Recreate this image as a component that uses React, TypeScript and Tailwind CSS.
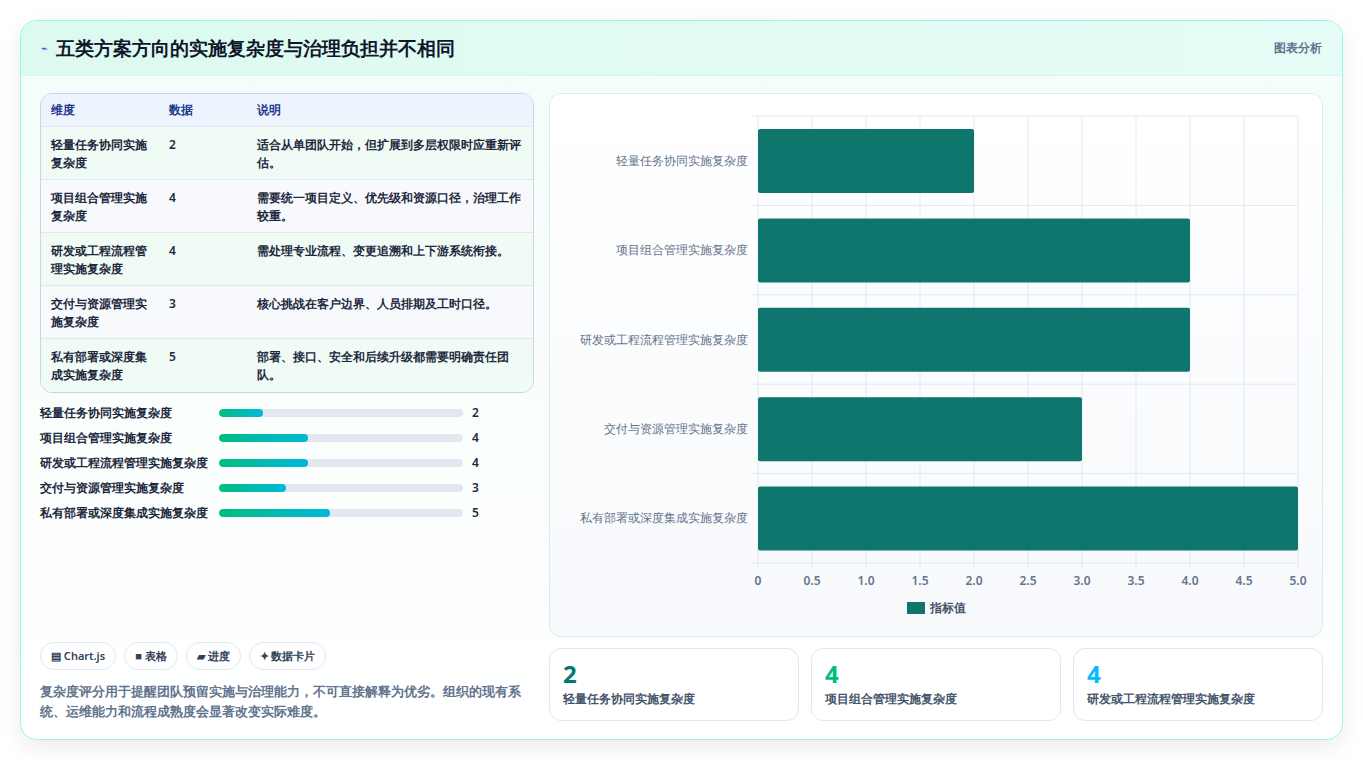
const rows = [
  { name: "轻量任务协同实施复杂度", value: 2, note: "适合从单团队开始，但扩展到多层权限时应重新评估。" },
  { name: "项目组合管理实施复杂度", value: 4, note: "需要统一项目定义、优先级和资源口径，治理工作较重。" },
  { name: "研发或工程流程管理实施复杂度", value: 4, note: "需处理专业流程、变更追溯和上下游系统衔接。" },
  { name: "交付与资源管理实施复杂度", value: 3, note: "核心挑战在客户边界、人员排期及工时口径。" },
  { name: "私有部署或深度集成实施复杂度", value: 5, note: "部署、接口、安全和后续升级都需要明确责任团队。" },
];

function Chart() {
  const x0 = 208, x1 = 748, y0 = 22, y1 = 469;
  const rowH = (y1 - y0) / 5;
  const sx = (v: number) => x0 + ((x1 - x0) * v) / 5;
  const ticks = [0, 0.5, 1, 1.5, 2, 2.5, 3, 3.5, 4, 4.5, 5];
  return (
    <svg width="772" height="542" className="block">
      {ticks.map((t) => (
        <line key={t} x1={sx(t)} x2={sx(t)} y1={y0} y2={y1 + 6} stroke="#e2e8f0" />
      ))}
      {[0, 1, 2, 3, 4, 5].map((i) => (
        <line key={i} x1={x0 - 6} x2={x1} y1={y0 + rowH * i} y2={y0 + rowH * i} stroke="#e2e8f0" />
      ))}
      {rows.map((r, i) => (
        <g key={r.name}>
          <rect x={x0} y={y0 + rowH * i + 13} width={sx(r.value) - x0} height={64} rx={2} fill="#0f766e" />
          <text x={x0 - 10} y={y0 + rowH * i + rowH / 2 + 4} textAnchor="end" fontSize="12" fill="#64748b">{r.name}</text>
        </g>
      ))}
      {ticks.map((t) => (
        <text key={t} x={sx(t)} y={491} textAnchor="middle" fontSize="12" fontWeight="600" fill="#64748b">{t === 0 || t === 5 ? t === 0 ? "0" : "5.0" : t.toFixed(1)}</text>
      ))}
      <rect x={357} y={508} width={18} height={12} fill="#0f766e" />
      <text x={380} y={518} fontSize="12" fontWeight="600" fill="#475569">指标值</text>
    </svg>
  );
}

export default function App() {
  return (
    <div className="min-h-screen bg-white p-5 font-['Noto_Sans_CJK_SC',sans-serif] text-slate-800">
      <div className="rounded-2xl border border-teal-200 bg-gradient-to-b from-[#f3fdf9] to-white shadow-[0_8px_24px_rgba(0,0,0,0.08)] overflow-hidden h-[720px] flex flex-col">
        <div className="h-[55px] flex items-center justify-between px-5 bg-gradient-to-r from-[#dcfaf0] to-[#e6fcf6] border-b border-teal-100">
          <div className="flex items-center gap-2">
            <span className="text-[11px] text-blue-700">⌁</span>
            <h1 className="text-[19px] font-bold text-slate-900">五类方案方向的实施复杂度与治理负担并不相同</h1>
          </div>
          <span className="text-xs font-semibold text-slate-500">图表分析</span>
        </div>
        <div className="flex-1 flex gap-[15px] px-[19px] pt-[17px] pb-[18px]">
          <div className="w-[496px] flex flex-col">
            <div className="rounded-xl border border-slate-300 overflow-hidden text-xs">
              <div className="flex h-[33px] items-center bg-[#eef4fe] text-blue-900 font-semibold border-b border-slate-200">
                <div className="w-[128px] pl-[10px]">维度</div>
                <div className="w-[88px]">数据</div>
                <div className="flex-1">说明</div>
              </div>
              {rows.map((r, i) => (
                <div key={r.name} className={`flex h-[53px] pt-[9px] font-semibold leading-[18px] border-b border-slate-200 last:border-b-0 ${i % 2 === 0 ? "bg-[#f1fbf6]" : "bg-[#f7f9fc]"}`}>
                  <div className="w-[128px] pl-[10px] pr-3">{r.name}</div>
                  <div className="w-[88px]">{r.value}</div>
                  <div className="flex-1 pr-3">{r.note}</div>
                </div>
              ))}
            </div>
            <div className="mt-[11px] flex flex-col gap-[7px]">
              {rows.map((r) => (
                <div key={r.name} className="flex items-center h-[18px] text-xs font-semibold">
                  <div className="w-[179px]">{r.name}</div>
                  <div className="w-[244px] h-2 rounded-full bg-slate-200 overflow-hidden">
                    <div className="h-full rounded-full bg-gradient-to-r from-emerald-500 to-cyan-500" style={{ width: `${(r.value / 11) * 100}%` }} />
                  </div>
                  <div className="ml-[9px]">{r.value}</div>
                </div>
              ))}
            </div>
            <div className="mt-auto flex gap-2 text-[11px] font-semibold text-slate-700">
              {["▤ Chart.js", "■ 表格", "▰ 进度", "✦ 数据卡片"].map((c) => (
                <span key={c} className="h-[28px] px-[10px] flex items-center rounded-full border border-slate-200 bg-white">{c}</span>
              ))}
            </div>
            <p className="mt-[11px] text-[13px] leading-[20px] font-semibold text-slate-500">复杂度评分用于提醒团队预留实施与治理能力，不可直接解释为优劣。组织的现有系统、运维能力和流程成熟度会显著改变实际难度。</p>
          </div>
          <div className="flex-1 flex flex-col gap-[11px]">
            <div className="h-[544px] rounded-xl border border-slate-200 bg-gradient-to-b from-white to-[#f7f9fc] overflow-hidden">
              <Chart />
            </div>
            <div className="flex gap-3">
              {[
                { v: 2, c: "text-teal-700", n: rows[0].name },
                { v: 4, c: "text-emerald-500", n: rows[1].name },
                { v: 4, c: "text-sky-400", n: rows[2].name },
              ].map((s) => (
                <div key={s.n} className="flex-1 h-[73px] rounded-xl border border-slate-200 bg-white px-[13px] pt-[10px]">
                  <div className={`text-[24px] leading-[30px] font-bold ${s.c}`}>{s.v}</div>
                  <div className="text-xs font-semibold text-slate-600 mt-[2px]">{s.n}</div>
                </div>
              ))}
            </div>
          </div>
        </div>
      </div>
    </div>
  );
}
